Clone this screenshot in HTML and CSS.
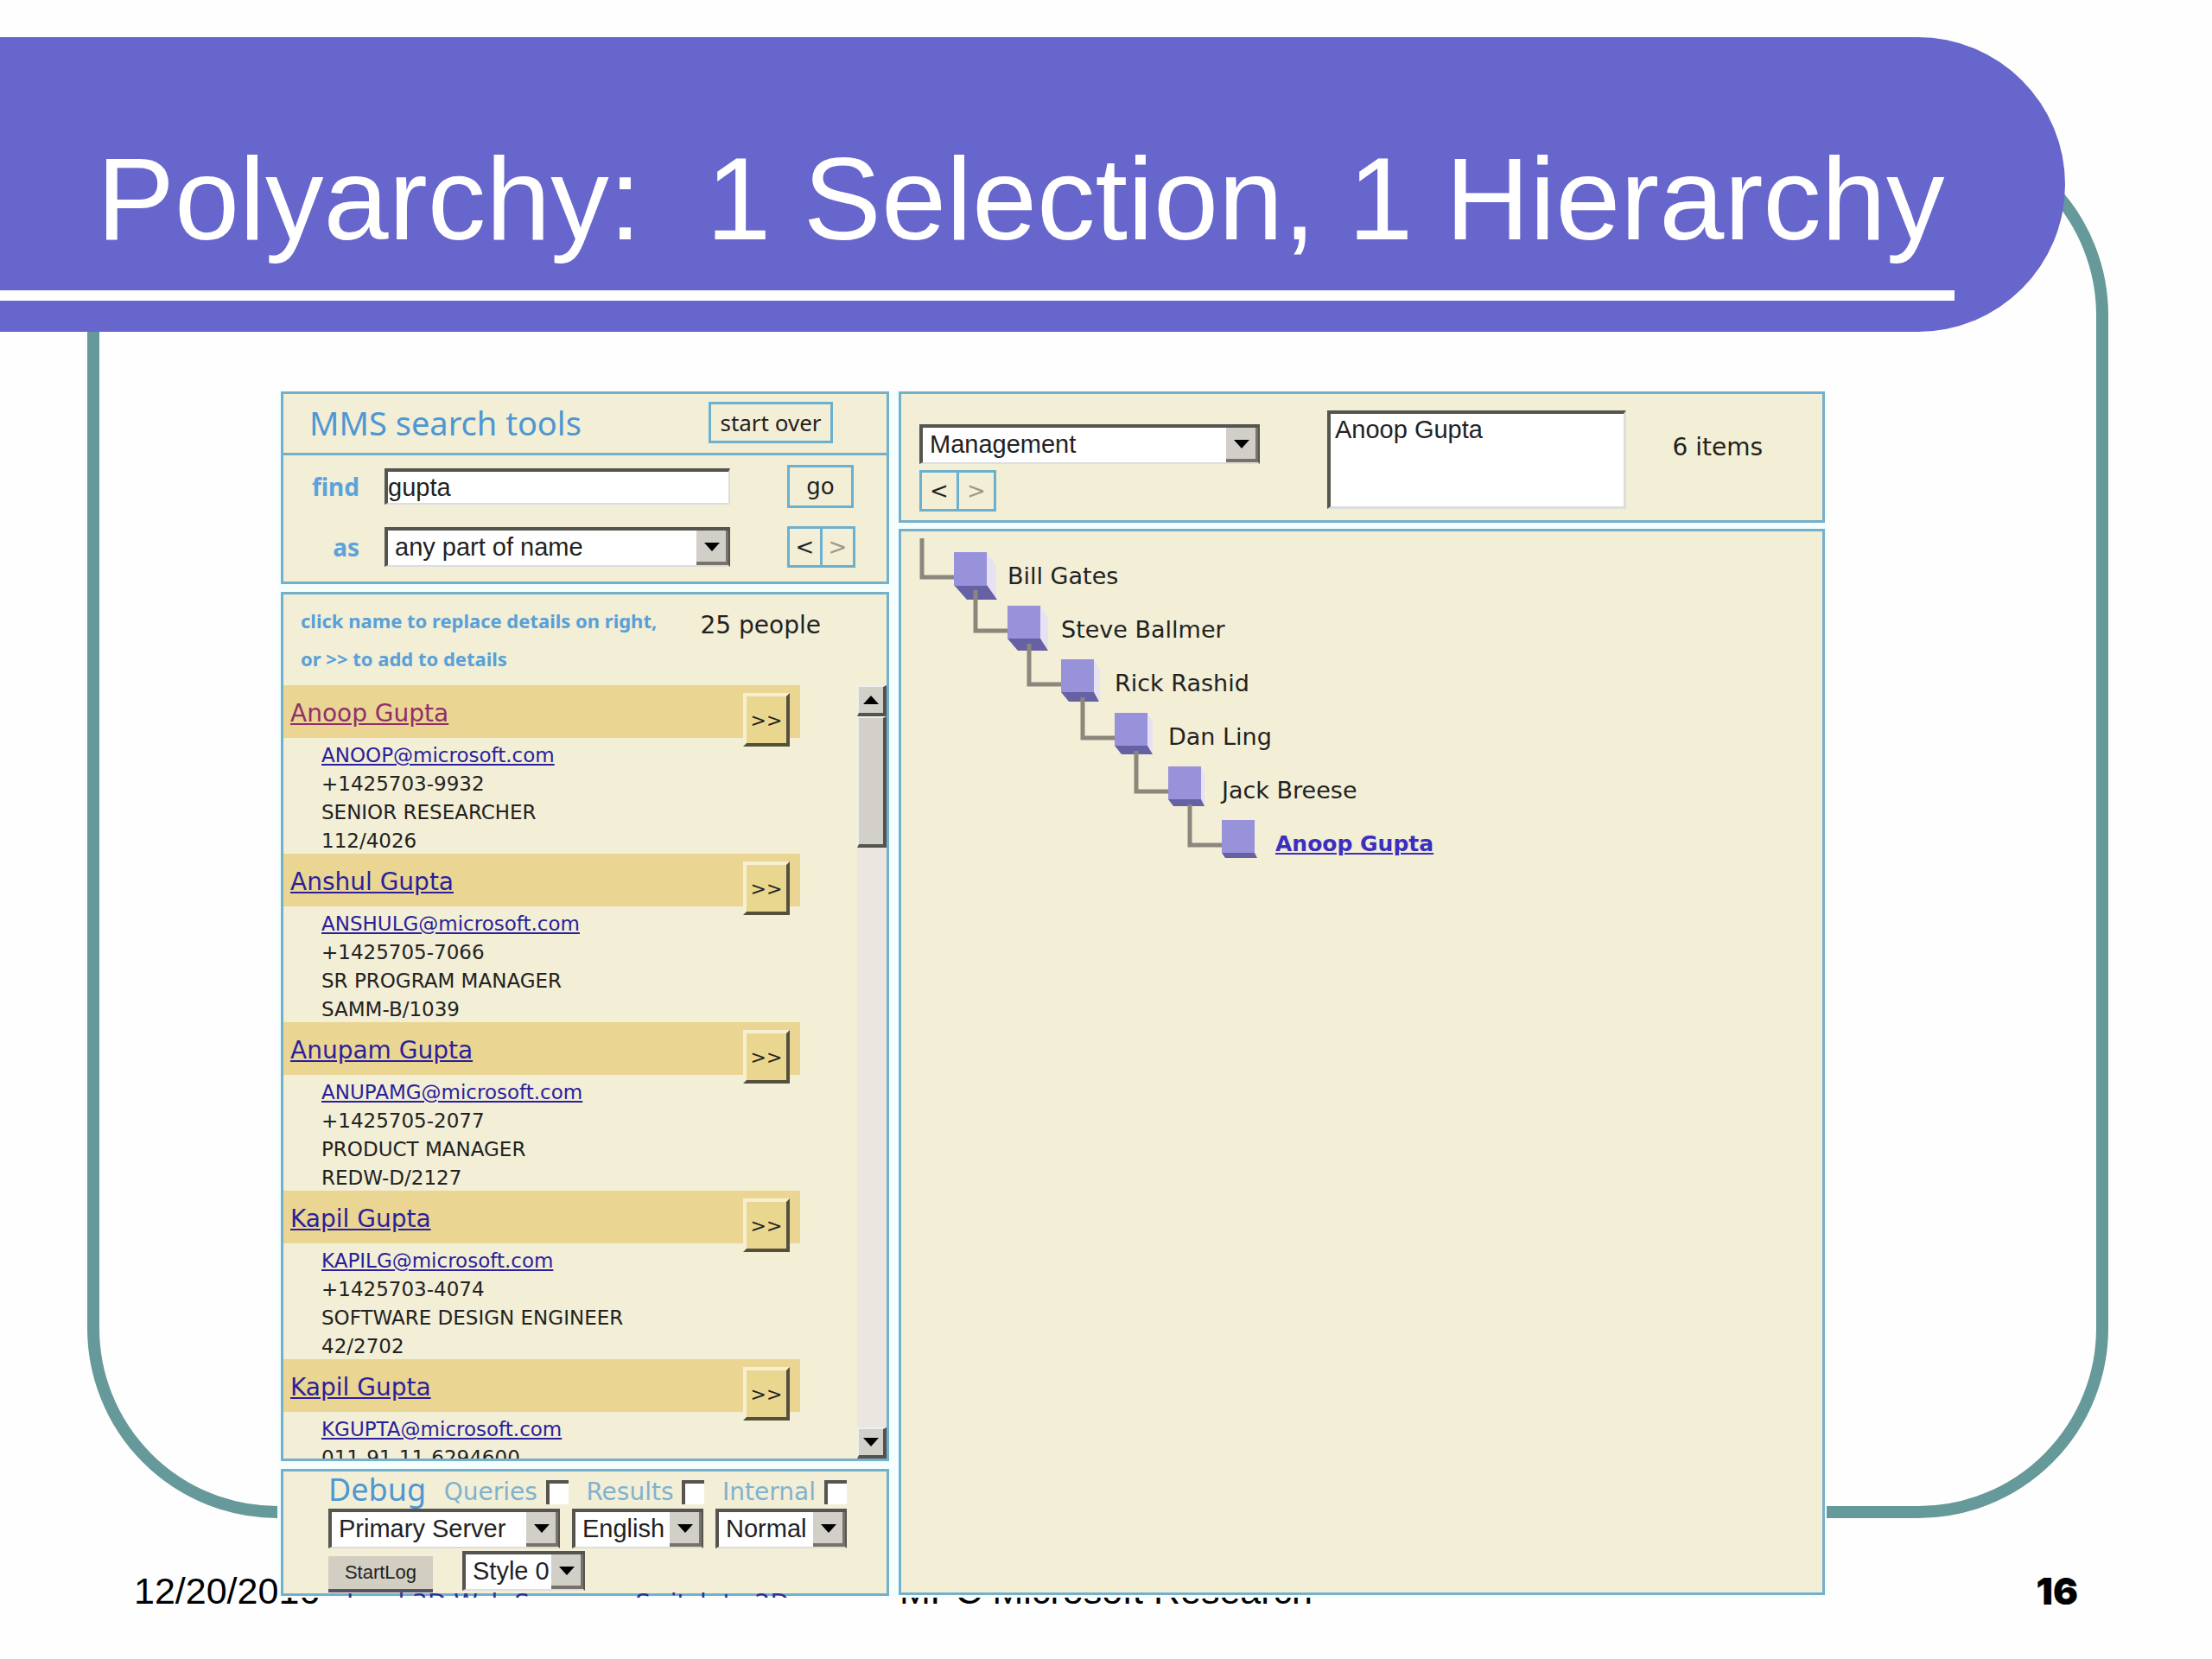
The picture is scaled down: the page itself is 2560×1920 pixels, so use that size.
FILE: index.html
```html
<!DOCTYPE html>
<html lang="en">
<head>
  <meta charset="UTF-8">
  <meta name="viewport" content="width=device-width, initial-scale=1.0">
  <title>Polyarchy: 1 Selection, 1 Hierarchy</title>
  <link rel="stylesheet" href="styles.css">
</head>
<body>
  <div class="slide">
    <div class="frame"></div>

    <header class="banner">
      <h1>Polyarchy:  1 Selection, 1 Hierarchy</h1>
      <div class="rule"></div>
    </header>

    <main class="app">
      <div class="left">
        <!-- Search -->
        <section class="panel">
          <div class="search-head">
            <h2>MMS search tools</h2>
            <button class="btn start-over">start over</button>
          </div>
          <form class="search-form">
            <label for="find">find</label>
            <input type="text" id="find" class="field" value="gupta">
            <button type="button" class="btn go">go</button>
            <label for="as">as</label>
            <span class="select">
              <select id="as"><option>any part of name</option></select>
            </span>
            <span class="pager">
              <button type="button" class="btn">&lt;</button>
              <button type="button" class="btn off">&gt;</button>
            </span>
          </form>
        </section>

        <!-- Results -->
        <section class="panel">
          <div class="results-head">
            <p class="hint">click name to replace details on right,<br>or &gt;&gt; to add to details</p>
            <p class="count">25 people</p>
          </div>
          <div class="results">
            <ul class="people">
              <li>
                <div class="name"><a class="visited" href="#">Anoop Gupta</a><button class="add">&gt;&gt;</button></div>
                <p><a href="#">ANOOP@microsoft.com</a><br>+1425703-9932<br>SENIOR RESEARCHER<br>112/4026</p>
              </li>
              <li>
                <div class="name"><a href="#">Anshul Gupta</a><button class="add">&gt;&gt;</button></div>
                <p><a href="#">ANSHULG@microsoft.com</a><br>+1425705-7066<br>SR PROGRAM MANAGER<br>SAMM-B/1039</p>
              </li>
              <li>
                <div class="name"><a href="#">Anupam Gupta</a><button class="add">&gt;&gt;</button></div>
                <p><a href="#">ANUPAMG@microsoft.com</a><br>+1425705-2077<br>PRODUCT MANAGER<br>REDW-D/2127</p>
              </li>
              <li>
                <div class="name"><a href="#">Kapil Gupta</a><button class="add">&gt;&gt;</button></div>
                <p><a href="#">KAPILG@microsoft.com</a><br>+1425703-4074<br>SOFTWARE DESIGN ENGINEER<br>42/2702</p>
              </li>
              <li>
                <div class="name"><a href="#">Kapil Gupta</a><button class="add">&gt;&gt;</button></div>
                <p><a href="#">KGUPTA@microsoft.com</a><br>011-91-11-6294600</p>
              </li>
            </ul>
            <div class="scrollbar">
              <button class="scroll-btn" aria-label="Scroll up"><svg viewBox="0 0 18 10"><path d="M9 0l9 10H0z"/></svg></button>
              <div class="thumb"></div>
              <button class="scroll-btn down" aria-label="Scroll down"><svg viewBox="0 0 18 10"><path d="M0 0h18L9 10z"/></svg></button>
            </div>
          </div>
        </section>

        <!-- Debug -->
        <section class="panel debug">
          <div class="checks">
            <h2>Debug</h2>
            <label>Queries <input type="checkbox"></label>
            <label>Results <input type="checkbox"></label>
            <label>Internal <input type="checkbox"></label>
          </div>
          <div class="debug-row">
            <span class="select server"><select aria-label="Server"><option>Primary Server</option></select></span>
            <span class="select"><select aria-label="Language"><option>English</option></select></span>
            <span class="select"><select aria-label="Mode"><option>Normal</option></select></span>
          </div>
          <div class="debug-row log-row">
            <button class="log">StartLog</button>
            <span class="select style"><select aria-label="Style"><option>Style 0</option></select></span>
          </div>
        </section>
        <div class="links"><a href="#">Load 3D Web Server</a><a href="#">Switch to 2D</a></div>
      </div>

      <div class="right">
        <section class="panel view-bar">
          <div class="view">
            <span class="select"><select aria-label="Hierarchy"><option>Management</option></select></span>
            <span class="pager">
              <button class="btn">&lt;</button>
              <button class="btn off">&gt;</button>
            </span>
          </div>
          <textarea aria-label="Selection">Anoop Gupta</textarea>
          <p class="count">6 items</p>
        </section>

        <!-- Hierarchy -->
        <section class="panel tree">
          <ul>
            <li>
              <div class="node">
                <svg viewBox="0 0 92 76"><path class="side" d="M78 18l11 16v38l-11-16z"/><path class="base" d="M40 56h38l12 17H55z"/><path class="face" d="M40 18h38v39H40z"/><path class="wire" d="M3 2v45h37"/></svg>
                <span>Bill Gates</span>
              </div>
              <ul>
                <li>
                  <div class="node">
                    <svg viewBox="0 0 92 76"><path class="side" d="M78 18l9 15v35l-9-12z"/><path class="base" d="M40 56h38l9 14H52z"/><path class="face" d="M40 18h38v38H40z"/><path class="wire" d="M3 0v47h37"/></svg>
                    <span>Steve Ballmer</span>
                  </div>
                  <ul>
                    <li>
                      <div class="node">
                        <svg viewBox="0 0 92 76"><path class="side" d="M78 18l7 12v36l-7-10z"/><path class="base" d="M40 56h38l6 11H49z"/><path class="face" d="M40 18h38v38H40z"/><path class="wire" d="M3 0v47h37"/></svg>
                        <span>Rick Rashid</span>
                      </div>
                      <ul>
                        <li>
                          <div class="node">
                            <svg viewBox="0 0 92 76"><path class="side" d="M78 18l6 11v36l-6-9z"/><path class="base" d="M40 56h38l6 10H48z"/><path class="face" d="M40 18h38v38H40z"/><path class="wire" d="M3 0v47h37"/></svg>
                            <span>Dan Ling</span>
                          </div>
                          <ul>
                            <li>
                              <div class="node">
                                <svg viewBox="0 0 92 76"><path class="side" d="M78 18l4 9v36l-4-7z"/><path class="base" d="M40 56h38l4 8H46z"/><path class="face" d="M40 18h38v38H40z"/><path class="wire" d="M3 0v47h37"/></svg>
                                <span>Jack Breese</span>
                              </div>
                              <ul>
                                <li>
                                  <div class="node">
                                    <svg viewBox="0 0 92 76"><path class="base" d="M40 56h38l3 6H44z"/><path class="face" d="M40 18h38v38H40z"/><path class="wire" d="M3 0v47h37"/></svg>
                                    <a href="#">Anoop Gupta</a>
                                  </div>
                                </li>
                              </ul>
                            </li>
                          </ul>
                        </li>
                      </ul>
                    </li>
                  </ul>
                </li>
              </ul>
            </li>
          </ul>
        </section>
      </div>
    </main>

    <footer>
      <span>12/20/2016</span>
      <span>MPC Microsoft Research</span>
      <span class="page">16</span>
    </footer>
  </div>
</body>
</html>
```
FILE: styles.css
```css
* {
  box-sizing: border-box;
}

body {
  margin: 0;
  background: #fefefe;
  color: #222;
  font-family: "DejaVu Sans", Verdana, sans-serif;
  font-size: 28px;
}

h1, h2, p, ul {
  margin: 0;
  padding: 0;
  font-weight: normal;
}

ul {
  list-style: none;
}

button, input, select, textarea {
  margin: 0;
  padding: 0;
  border-radius: 0;
  color: #222;
  font-family: inherit;
  font-size: inherit;
}

/* Slide */
.slide {
  position: relative;
  min-height: 100vh;
  padding-top: 43px;
  overflow: hidden;
}

.frame {
  position: absolute;
  top: 145px;
  right: 120px;
  bottom: 163px;
  left: 101px;
  border: 14px solid #669999;
  border-radius: 220px;
}

.banner {
  position: relative;
  height: 341px;
  margin-right: 170px;
  padding-top: 113px;
  background: #6666cc;
  border-radius: 0 171px 171px 0;
}

.banner h1 {
  padding-left: 112px;
  color: #fff;
  font-family: "Liberation Sans", Arial, sans-serif;
  font-size: 135px;
  line-height: 150px;
  white-space: pre;
}

.rule {
  height: 12px;
  margin: 30px 128px 0 0;
  background: #fff;
}

.app {
  position: relative;
  z-index: 1;
  display: grid;
  grid-template-columns: 704px 1fr;
  gap: 11px;
  margin: 69px 446px 0 321px;
  padding: 0 2px 0 4px;
  background: #f4fefe;
}

.left, .right {
  display: flex;
  flex-direction: column;
}

.left {
  gap: 9px;
}

.right {
  gap: 7px;
  padding-bottom: 3px;
}

.panel {
  background: #f3eed6;
  border: 3px solid #74b0cc;
}

/* Controls */
.btn {
  background: transparent;
  border: 3px solid #6cb0cf;
  font-size: 26px;
}

.off {
  color: #998;
}

.pager {
  display: flex;
}

.pager .btn {
  width: 41px;
  height: 48px;
}

.pager .off {
  margin-left: -3px;
}

.select {
  position: relative;
  display: block;
  height: 46px;
  font-family: "Liberation Sans", Arial, sans-serif;
  font-size: 29px;
}

.select select {
  width: 100%;
  height: 100%;
  padding: 0 0 2px 8px;
  appearance: none;
  background: #fff;
  border: 4px solid #55544e;
  border-right-width: 2px;
  border-bottom: 2px solid #ddd;
}

.select::after {
  content: "";
  position: absolute;
  top: 4px;
  right: 2px;
  bottom: 2px;
  width: 34px;
  background: #d2cfc8;
  border: solid #77736a;
  border-width: 0 3px 4px 0;
  pointer-events: none;
}

.select::before {
  content: "";
  position: absolute;
  z-index: 1;
  top: 18px;
  right: 12px;
  border: 9px solid transparent;
  border-top: 10px solid #000;
  border-bottom: 0;
  pointer-events: none;
}

/* Search */
.search-head {
  display: flex;
  justify-content: space-between;
  align-items: center;
  height: 71px;
  padding: 0 62px 2px 30px;
  border-bottom: 3px solid #74b0cc;
}

h2 {
  color: #4d97d3;
  font-family: "Noto Sans", "Trebuchet MS", sans-serif;
  font-size: 38px;
}

.start-over {
  width: 144px;
  height: 48px;
  font-family: "Noto Sans", sans-serif;
}

.search-form {
  display: grid;
  grid-template-columns: 88px 400px 132px;
  column-gap: 15px;
  row-gap: 21px;
  justify-content: start;
  align-items: center;
  padding: 11px 0 16px 14px;
}

.search-form label {
  padding-right: 14px;
  color: #5ba3da;
  font-family: "Noto Sans", "Trebuchet MS", sans-serif;
  font-weight: bold;
  text-align: right;
}

.search-form .pager, .go {
  margin-left: 51px;
}

.go {
  width: 77px;
  height: 50px;
}

.field {
  height: 42px;
  border: 4px solid #55544e;
  border-right: 2px solid #ddd;
  border-bottom: 2px solid #ddd;
  font-family: "Liberation Sans", Arial, sans-serif;
  font-size: 29px;
}

/* Results */
.results-head {
  display: flex;
  justify-content: space-between;
  height: 105px;
  padding: 8px 76px 0 20px;
}

.hint {
  color: #58a0d8;
  font-family: "Noto Sans", "Trebuchet MS", sans-serif;
  font-size: 22px;
  font-weight: bold;
  line-height: 44px;
}

.results-head .count {
  padding-top: 12px;
}

.count {
  line-height: 32px;
}

.results {
  display: flex;
  justify-content: space-between;
  height: 895px;
  overflow: hidden;
}

.people {
  width: 598px;
}

.people a {
  color: #2a1f9c;
}

.people .visited {
  color: #8f2f6c;
}

.people li {
  height: 195px;
}

.name {
  display: flex;
  justify-content: space-between;
  height: 61px;
  padding: 9px 12px 0 8px;
  background: #ead592;
  line-height: 48px;
}

.add {
  width: 54px;
  height: 62px;
  background: #ead78f;
  border: solid;
  border-width: 4px;
  border-color: #f6efd2 #55503c #55503c #f6efd2;
  font-size: 22px;
}

.people p {
  padding: 4px 0 0 44px;
  font-size: 23px;
  line-height: 33px;
}

.scrollbar {
  display: flex;
  flex-direction: column;
  width: 34px;
  background: #ebe6e0;
}

.scroll-btn, .thumb {
  height: 36px;
  background: #d3d0c9;
  border: solid;
  border-width: 2px 4px 4px 2px;
  border-color: #eee #55534e #55534e #eee;
}

.scroll-btn svg {
  display: block;
  width: 18px;
  margin: 0 auto;
}

.thumb {
  height: 152px;
}

.down {
  margin-top: auto;
}

/* Debug */
.debug {
  height: 147px;
  padding: 5px 46px 0 52px;
}

.checks, .debug-row {
  display: flex;
  justify-content: space-between;
}

.checks {
  height: 38px;
  color: #7fb2cf;
  line-height: 38px;
}

.checks h2 {
  font-size: 36px;
  line-height: 32px;
}

.checks label {
  display: flex;
  align-items: center;
  gap: 10px;
}

.checks input {
  width: 26px;
  height: 28px;
  appearance: none;
  background: #fff;
  border: solid #55544e;
  border-width: 4px 0 0 4px;
}

.debug-row .select {
  width: 152px;
}

.debug-row .server {
  width: 268px;
}

.log-row {
  justify-content: start;
  gap: 34px;
  padding-top: 3px;
}

.debug-row .style {
  width: 142px;
}

.log {
  width: 121px;
  height: 42px;
  margin-top: 6px;
  background: #d3cec2;
  border: 0;
  border-bottom: 4px solid #55536a;
  font-family: "Liberation Sans", Arial, sans-serif;
  font-size: 22px;
}

/* Cut-off row under the debug panel */
.links {
  display: flex;
  gap: 48px;
  height: 6px;
  margin-top: -13px;
  padding-left: 76px;
  overflow: hidden;
  line-height: 26px;
}

.links a {
  color: #2a2f9c;
}

/* Right side */
.view-bar {
  display: flex;
  align-items: flex-start;
  height: 152px;
  padding: 19px 69px 0 21px;
}

.view {
  width: 394px;
  margin: 16px 78px 0 0;
}

.view .select {
  margin-bottom: 7px;
}

.view .btn {
  width: 46px;
}

textarea {
  width: 346px;
  height: 114px;
  padding: 2px 0 0 5px;
  border: 4px solid #55544e;
  border-right: 3px solid #ddd;
  border-bottom: 3px solid #ddd;
  font-family: "Liberation Sans", Arial, sans-serif;
  font-size: 29px;
  resize: none;
}

.view-bar .count {
  margin-left: auto;
  padding-top: 27px;
}

.tree {
  flex: 1;
  padding: 6px 0 0 21px;
}

.tree ul ul {
  padding-left: 62px;
}

.node {
  display: flex;
  gap: 10px;
  height: 62px;
}

.node svg {
  width: 92px;
  height: 76px;
}

.node span, .node a {
  margin-top: 30px;
  font-size: 27px;
  line-height: 32px;
}

.node a {
  color: #3a2fc0;
  font-size: 25px;
  font-weight: bold;
}

.face {
  fill: #9792da;
}

.side {
  fill: #e6e1f3;
}

.base {
  fill: #6660a4;
}

.wire {
  fill: none;
  stroke: #8c877c;
  stroke-width: 5;
}

/* Footer */
footer {
  display: grid;
  grid-template-columns: 1fr auto 1fr;
  margin-top: -32px;
  padding: 0 155px;
  color: #000;
  font-family: "Liberation Sans", Arial, sans-serif;
  font-size: 43px;
  line-height: 48px;
}

.page {
  font-family: Inter, sans-serif;
  font-weight: 900;
  text-align: right;
}
```
